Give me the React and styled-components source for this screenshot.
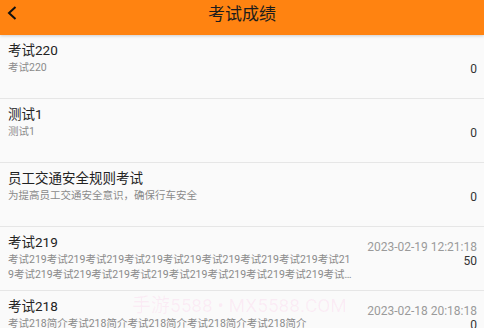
import React from 'react'
import styled, { createGlobalStyle } from 'styled-components'

const GlobalStyle = createGlobalStyle`
    html, body {
        margin: 0;
        padding: 0;
        background: #fafafa;
        overflow: hidden;
    }
    body {
        font-family: Roboto, "Noto Sans CJK SC", sans-serif;
    }
`

const Page = styled.div`
    position: relative;
    width: 484px;
    height: 328px;
    overflow: hidden;
    background: #fafafa;
`

const Header = styled.div`
    position: relative;
    z-index: 1;
    height: 35px;
    display: flex;
    align-items: flex-start;
    justify-content: center;
    background: #ff8311;
    box-shadow: 0 1px 3px rgba(0, 0, 0, 0.18);
`

const BackButton = styled.div`
    position: absolute;
    left: 7px;
    top: 6px;
    width: 10px;
    height: 14px;
    display: flex;
`

const Title = styled.div`
    line-height: 28px;
    font-size: 17px;
    color: #1c1c1c;
`

const List = styled.div`
    display: flex;
    flex-direction: column;
`

const Row = styled.div`
    height: 64px;
    box-sizing: border-box;
    display: flex;
    align-items: flex-start;
    gap: 12px;
    padding: 6px 7px 0 8px;
    border-bottom: 1px solid #e6e6e6;
    background: #fafafa;
`

const Texts = styled.div`
    flex: 1;
    min-width: 0;
`

const Name = styled.div`
    font-size: 13.5px;
    line-height: 19px;
    color: #222;
`

const Desc = styled.div`
    font-size: 10.5px;
    line-height: 15px;
    color: #8a8a8a;
    display: -webkit-box;
    -webkit-line-clamp: 2;
    -webkit-box-orient: vertical;
    overflow: hidden;
    word-break: break-all;
`

const Side = styled.div`
    margin-top: 7px;
    display: flex;
    flex-direction: column;
    align-items: flex-end;
    flex-shrink: 0;
`

const Time = styled.div`
    font-size: 12px;
    line-height: 14px;
    height: 14px;
    color: #9a9a9a;
    white-space: nowrap;
`

const Score = styled.div`
    font-size: 12px;
    line-height: 15px;
    color: #333;
`

const Watermark = styled.div`
    position: absolute;
    left: 132px;
    top: 293px;
    font-size: 19px;
    line-height: 26px;
    color: rgba(255, 90, 190, 0.09);
    white-space: nowrap;
    pointer-events: none;
`

const exams = [
    { name: '考试220', desc: '考试220', time: '', score: 0 },
    { name: '测试1', desc: '测试1', time: '', score: 0 },
    { name: '员工交通安全规则考试', desc: '为提高员工交通安全意识，确保行车安全', time: '', score: 0 },
    { name: '考试219', desc: '考试219'.repeat(20), time: '2023-02-19 12:21:18', score: 50 },
    { name: '考试218', desc: '考试218简介'.repeat(5), time: '2023-02-18 20:18:18', score: 0 },
]

const BackIcon = () =>
    <svg width="10" height="14" viewBox="0 0 10 14">
        <polyline points="8.5,1 2,7 8.5,13" fill="none" stroke="#111" strokeWidth="2" />
    </svg>

export default function App() {
    return <Page>
        <GlobalStyle />
        <Header>
            <BackButton><BackIcon /></BackButton>
            <Title>考试成绩</Title>
        </Header>
        <List>
            {exams.map(e =>
                <Row key={e.name}>
                    <Texts>
                        <Name>{e.name}</Name>
                        <Desc>{e.desc}</Desc>
                    </Texts>
                    <Side>
                        <Time>{e.time}</Time>
                        <Score>{e.score}</Score>
                    </Side>
                </Row>
            )}
        </List>
        <Watermark>手游5588 • MX5588.COM</Watermark>
    </Page>
}
